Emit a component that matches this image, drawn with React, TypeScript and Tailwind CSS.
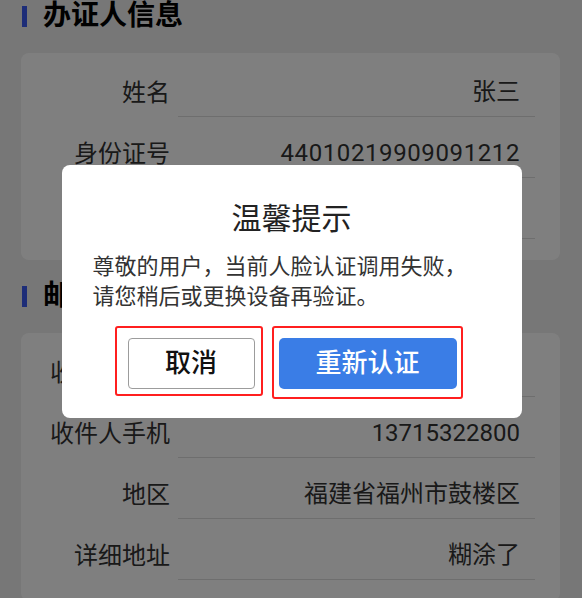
import React from "react";

/**
 * 办证信息确认页 + 人脸认证失败弹窗
 * 页面本身正常渲染，再盖一层半透明遮罩和居中的提示框。
 */

type Row = { label: string; value: string };

const applicant: Row[] = [
  { label: "姓名", value: "张三" },
  { label: "身份证号", value: "44010219909091212" },
  { label: "手机号码", value: "13715322800" },
];

const mailing: Row[] = [
  { label: "收件人姓名", value: "张三" },
  { label: "收件人手机", value: "13715322800" },
  { label: "地区", value: "福建省福州市鼓楼区" },
  { label: "详细地址", value: "糊涂了" },
];

const FONT = "font-['Roboto','Noto_Sans_CJK_SC',sans-serif]";

/** Section title with the blue bar on the left */
function SectionTitle({ children }: { children: React.ReactNode }) {
  return (
    <div className="flex h-[32px] items-center">
      <span className="ml-[1px] h-[21px] w-[5px] bg-[#3b5af0]" />
      <h2 className="ml-[16px] text-[28px] font-bold leading-[32px] text-black">
        {children}
      </h2>
    </div>
  );
}

function InfoCard({ rows }: { rows: Row[] }) {
  return (
    <div className="mt-[21px] rounded-[8px] bg-white pb-[21px] pr-[25px] pt-[3px]">
      {rows.map((row) => (
        <div key={row.label} className="flex h-[61px] items-end">
          <div className="w-[149px] shrink-0 pb-[12px] text-right text-[24px] leading-[24px] text-[#333]">
            {row.label}
          </div>
          <div
            className={[
              "ml-[8px] flex h-full flex-1 items-end justify-end border-b border-[#dcdcdc] pb-[12px] pr-[15px] text-[24px] leading-[24px] text-[#333]",
              row.value.length > 12 ? "tracking-[0.6px]" : "",
            ].join(" ")}
          >
            {row.value}
          </div>
        </div>
      ))}
    </div>
  );
}

export default function App() {
  return (
    <div className={`relative min-h-screen overflow-hidden bg-[#eeeeee] ${FONT}`}>
      {/* Page content */}
      <div className="pl-[21px] pr-[22px]">
        <SectionTitle>办证人信息</SectionTitle>
        <InfoCard rows={applicant} />
        <div className="mt-[20px]">
          <SectionTitle>邮寄信息</SectionTitle>
        </div>
        <InfoCard rows={mailing} />
      </div>

      {/* Mask */}
      <div className="fixed inset-0 bg-black/50" />

      {/* Dialog */}
      <div className="fixed inset-0 flex items-start justify-center pl-[1px] pt-[165px]">
        <div className="h-[253px] w-[460px] rounded-[8px] bg-white">
          <h3 className="pt-[36px] text-center text-[30px] font-normal leading-[36px] text-[#222]">
            温馨提示
          </h3>
          <p className="mt-[15px] pl-[31px] text-[22px] leading-[30px] text-[#333]">
            尊敬的用户，当前人脸认证调用失败，
            <br />
            请您稍后或更换设备再验证。
          </p>
          <div className="ml-[53px] mt-[14px] flex items-start gap-[9px]">
            <div className="rounded-[3px] border-2 border-[#ff1f1f] pb-[5px] pl-[11px] pr-[6px] pt-[10px]">
              <button className="h-[51px] w-[127px] rounded-[4px] border border-[#9c9c9c] bg-white text-[26px] font-medium text-[#111]">
                取消
              </button>
            </div>
            <div className="rounded-[3px] border-2 border-[#ff1f1f] pb-[8px] pl-[5px] pr-[4px] pt-[10px]">
              <button className="h-[51px] w-[178px] rounded-[5px] bg-[#3a7de6] text-[26px] font-medium text-white">
                重新认证
              </button>
            </div>
          </div>
        </div>
      </div>
    </div>
  );
}
